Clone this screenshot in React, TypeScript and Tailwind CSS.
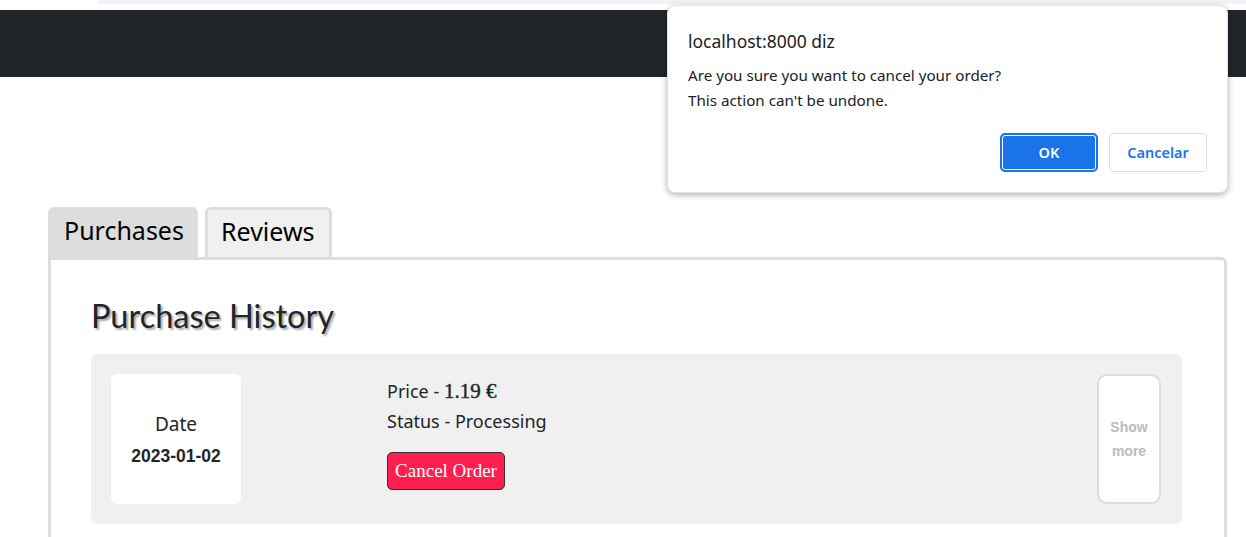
import React from "react";

const sans = { fontFamily: '"Noto Sans", "Open Sans", sans-serif' };

const ConfirmDialog = () => {
    return (
        <div
            className="absolute left-[667px] top-[5px] w-[561px] h-[188px] bg-white rounded-[8px] border border-[#e3e3e3] shadow-[0_2px_6px_rgba(0,0,0,0.3)] pl-[20px] pr-[20px] pt-[22px] flex flex-col"
            style={sans}
        >
            <p className="text-[17.5px] leading-[26px] text-[#202124]">localhost:8000 diz</p>
            <div className="pt-[9px] text-[15.2px] leading-[25px] text-[#202124]">
                <p>Are you sure you want to cancel your order?</p>
                <p>This action can't be undone.</p>
            </div>
            <div className="flex justify-end gap-[11px] pt-[20px]">
                <button className="w-[98px] h-[39px] bg-[#1a73e8] rounded-[5px] border-2 border-[#1a73e8] shadow-[inset_0_0_0_1px_#fff] text-white text-[14.5px] font-semibold">
                    OK
                </button>
                <button className="w-[98px] h-[39px] bg-white rounded-[4px] border border-[#dadce0] text-[#1a73e8] text-[14.5px] font-semibold">
                    Cancelar
                </button>
            </div>
        </div>
    );
};

const OrderCard = () => {
    return (
        <div className="flex h-[170px] bg-[#f0f0f0] rounded-[6px] p-[20px] pr-[21px]">
            <div className="w-[130px] h-[130px] bg-white rounded-[6px] flex flex-col items-center justify-center">
                <p className="text-[19px] leading-[28px] text-[#212529]" style={sans}>Date</p>
                <p className="text-[17.5px] leading-[24px] font-bold text-[#212529] mt-[6px]" style={{ fontFamily: '"Liberation Sans", Arial, sans-serif' }}>
                    2023-01-02
                </p>
            </div>
            <div className="ml-[146px] flex flex-col pt-[3px]" style={sans}>
                <p className="text-[18px] leading-[28px] text-[#212529]">
                    Price -{" "}
                    <span
                        className="text-[21px] font-normal [-webkit-text-stroke:0.4px_#212529]"
                        style={{ fontFamily: '"Liberation Serif", "Times New Roman", serif' }}
                    >
                        1.19 €
                    </span>
                </p>
                <p className="text-[18px] leading-[28px] text-[#212529] mt-[2px]">Status - Processing</p>
                <button
                    className="mt-[17px] w-[118px] h-[38px] bg-[#ff1f4f] border border-[#333] rounded-[5px] text-white text-[19px]"
                    style={{ fontFamily: '"Liberation Serif", "Times New Roman", serif' }}
                >
                    Cancel Order
                </button>
            </div>
            <div className="ml-auto w-[64px] h-[130px] bg-white border-2 border-[#ddd] rounded-[10px] flex items-center justify-center">
                <p className="text-[14px] leading-[24px] font-bold text-[#bbb] text-center" style={{ fontFamily: '"Liberation Sans", Arial, sans-serif' }}>
                    Show<br />more
                </p>
            </div>
        </div>
    );
};

export default function App() {
    return (
        <div className="relative w-full h-[537px] overflow-hidden bg-white">
            <div className="h-[10px] bg-white">
                <div className="ml-[97px] h-[4px] bg-[#f1f3f4] rounded-bl-[10px]" />
            </div>
            <div className="h-[67px] bg-[#212529]" />

            <div className="pl-[48px] pt-[130px]">
                <div className="flex gap-[7px] items-end">
                    <div className="w-[150px] h-[50px] bg-[#ddd] rounded-t-[6px] pl-[16px] pb-[2px] flex items-center text-[25px] text-black" style={sans}>
                        Purchases
                    </div>
                    <div className="w-[127px] h-[50px] bg-[#f0f0f0] border-[3px] border-b-0 border-[#ddd] rounded-t-[6px] pl-[13px] pb-[3px] flex items-center text-[25px] text-black" style={sans}>
                        Reviews
                    </div>
                </div>
                <div className="w-[1179px] h-[300px] border-[3px] border-[#ddd] rounded-tr-[6px] pl-[40px] pr-[42px] pt-[37px]">
                    <h1
                        className="text-[32.5px] leading-[38px] text-[#212529] [text-shadow:2px_2px_2px_rgba(0,0,0,0.35)]"
                        style={{ fontFamily: '"Gill Sans", Lato, sans-serif' }}
                    >
                        Purchase History
                    </h1>
                    <div className="mt-[19px]">
                        <OrderCard />
                    </div>
                </div>
            </div>

            <ConfirmDialog />
        </div>
    );
}
